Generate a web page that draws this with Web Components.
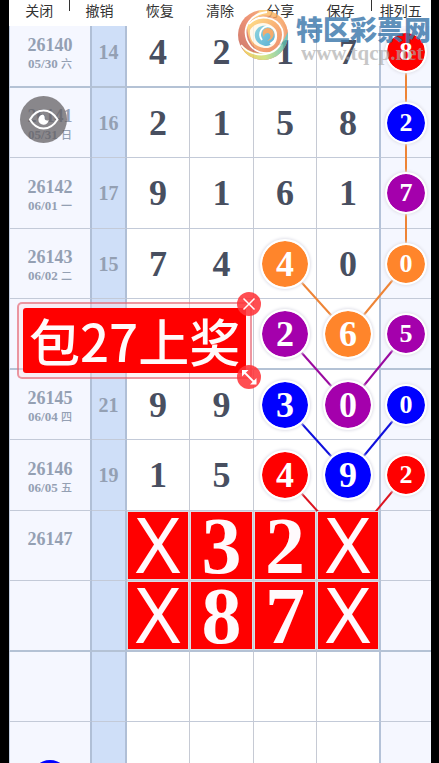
<!DOCTYPE html>
<html lang="zh-CN">
<head>
<meta charset="utf-8">
<meta name="viewport" content="width=device-width, initial-scale=1">
<title>排列五</title>
<style>
body { margin: 0; background: #000; }
</style>
</head>
<body>
<lottery-app></lottery-app>
<script>
const define = (name, html, setup) => {
  const template = document.createElement('template');
  template.innerHTML = html;
  customElements.define(name, class extends HTMLElement {
    constructor() {
      super();
      this.attachShadow({ mode: 'open' }).append(template.content.cloneNode(true));
    }
    connectedCallback() { if (setup) setup(this, this.shadowRoot); }
  });
};

define('number-ball', `
<style>
  :host { display: flex; align-items: center; justify-content: center; box-sizing: border-box;
    width: 50px; height: 50px; margin: 0 auto; border-radius: 50%; border: 2px solid #fff;
    background: var(--ball) padding-box; box-shadow: 0 0 3px 1px #e2e2ea; color: #fff;
    font: bold 36px/46px "Liberation Serif", serif; position: relative; z-index: 2; }
  :host([small]) { width: 42px; height: 42px; font-size: 26px; line-height: 38px; }
  :host([color=red]) { --ball: #ff0000; }
  :host([color=blue]) { --ball: #0000ff; }
  :host([color=purple]) { --ball: #a400ac; }
  :host([color=orange]) { --ball: #ff852b; }
</style><slot></slot>`);

define('pick-tile', `
<style>
  :host { display: flex; align-items: center; justify-content: center; box-sizing: border-box;
    height: 100%; border: 1px solid #dcdce2; background: #ff0000; color: #fffafc;
    font: bold 80px/66px "Liberation Serif", serif; position: relative; z-index: 2; }
  :host([blank]) { font: 400 77px/62px "Noto Sans", sans-serif; padding-bottom: 4px; }
</style><slot></slot>`);

define('tool-bar', `
<style>
  :host { display: grid; grid-auto-flow: column; grid-auto-columns: 1fr; height: 26px;
    background: #fff; position: relative; z-index: 3; }
</style><slot></slot>`);

define('tool-item', `
<style>
  :host { display: block; position: relative; }
  :host([divided])::before { content: ""; position: absolute; left: 0; top: 0; width: 1px; height: 11px; background: #333; }
  button { display: block; width: 100%; height: 20px; padding: 0; border: 0; background: none; color: #333;
    font: 400 14px/20px "Noto Sans CJK SC", sans-serif; }
</style><button type="button"><slot></slot></button>`);

define('trend-chart', `
<style>
  :host { display: block; position: relative; margin-top: -9px; background: #fff; }
  table { width: 100%; table-layout: fixed; border-collapse: separate; border-spacing: 0;
    font-family: "Liberation Serif", "Noto Sans CJK SC", serif; font-weight: bold; text-align: center; }
  th, td { padding: 0; box-sizing: border-box; border: 0 solid #c6cad4; border-right-width: 1px; border-bottom: 1px solid #c3cad8;
    vertical-align: middle; line-height: 1; }
  tr > * { height: 70px; }
  tr:nth-child(odd) > * { height: 71px; }
  tr:nth-child(4n+1) > * { border-bottom: 2px solid #b4c2d5; }
  .issue { background: #f5f7ff; color: #94a0b3; border-left: 1px solid #c3cfe2; border-right: 2px solid #b0bfd6; font-size: 18px; padding-top: 3px; }
  .issue span { display: block; line-height: 20px; }
  .issue small { display: block; height: 16px; font-size: 13px; line-height: 16px; }
  .issue i { font: 500 11px/16px "Noto Sans CJK SC", sans-serif; }
  .sum { background: #cfdff8; color: #94a0b3; border-right: 2px solid #b0bfd6; font-size: 20px; }
  .num { color: #484f60; font-size: 36px; }
  .num.d { border-right: 2px solid #b4c2d8; }
  .last { background: #f5f7ff; border-right: 0; }
  svg { position: absolute; left: 0; top: 0; width: 100%; height: 776px; z-index: 1; pointer-events: none; }
  line { stroke-width: 2; vector-effect: non-scaling-stroke; }
</style>
<table>
  <colgroup></colgroup>
  <tbody></tbody>
</table>
<svg viewBox="9 17 422 776" preserveAspectRatio="none" fill="none" aria-hidden="true">
  <g stroke="#ee8436"><line x1="406" y1="52" x2="406" y2="264"/><line x1="285" y1="264" x2="348" y2="334"/><line x1="406" y1="264" x2="348" y2="334"/></g>
  <g stroke="#9a0aa0"><line x1="285" y1="334" x2="348" y2="405"/><line x1="406" y1="334" x2="348" y2="405"/></g>
  <g stroke="#1010dc"><line x1="285" y1="405" x2="348" y2="475"/><line x1="406" y1="405" x2="348" y2="475"/></g>
  <g stroke="#dc1420"><line x1="285" y1="475" x2="348" y2="545"/><line x1="406" y1="475" x2="348" y2="545"/></g>
</svg>`, (host, root) => {
  const rows = [
    ['26140', '05/30 六', '14', '4', '2', '1', '7', '8red'],
    ['26141', '05/31 日', '16', '2', '1', '5', '8', '2blue'],
    ['26142', '06/01 一', '17', '9', '1', '6', '1', '7purple'],
    ['26143', '06/02 二', '15', '7', '4', '4orange', '0', '0orange'],
    ['', '', '', '', '', '2purple', '6orange', '5purple'],
    ['26145', '06/04 四', '21', '9', '9', '3blue', '0purple', '0blue'],
    ['26146', '06/05 五', '19', '1', '5', '4red', '9blue', '2red'],
    ['26147', '', '', 'X#', '3#', '2#', 'X#', ''],
    ['', '', '', 'X#', '8#', '7#', 'X#', ''],
    ['', '', '', '', '', '', '', ''],
    ['', '', '', '', '', '', '', '']
  ];
  const total = 422;
  root.querySelector('colgroup').innerHTML = [83, 35, 63, 64, 63, 64, 50]
    .map(w => `<col style="width:calc(100% * ${w} / ${total})">`).join('');
  const cell = (value, small) => {
    if (!value) return '';
    if (value[1] === '#') return `<pick-tile${value[0] === 'X' ? ' blank' : ''}>${value[0]}</pick-tile>`;
    if (value.length > 1) return `<number-ball color="${value.slice(1)}"${small ? ' small' : ''}>${value[0]}</number-ball>`;
    return value;
  };
  const issueCell = (issue, date) => {
    if (!issue) return '';
    const [day, week] = date.split(' ');
    return `<span>${issue}</span><small>${date ? `${day} <i>${week}</i>` : ''}</small>`;
  };
  root.querySelector('tbody').innerHTML = rows.map(([issue, date, sum, a, b, c, d, e]) => `<tr>
    <th class="issue" scope="row">${issueCell(issue, date)}</th>
    <td class="sum">${sum}</td><td class="num">${cell(a)}</td><td class="num">${cell(b)}</td>
    <td class="num">${cell(c)}</td><td class="num d">${cell(d)}</td><td class="last">${cell(e, true)}</td></tr>`).join('');
});

define('text-sticker', `
<style>
  :host { display: block; box-sizing: border-box; padding: 4px; border: 2px solid rgba(222, 60, 75, .5);
    border-radius: 5px; background: rgba(255, 225, 230, .4); }
  .text { display: block; padding: 0 6px; border-radius: 3px; background: #ff0000; color: #fffafa; text-align: center;
    white-space: nowrap; font: 500 51px/65px "Noto Sans CJK SC", sans-serif; }
  button { position: absolute; right: -11px; width: 24px; height: 24px; padding: 0; border: 0; border-radius: 50%;
    background: rgba(255, 52, 56, .87); }
  .close { top: -12px; }
  .resize { bottom: -12px; }
  svg { display: block; width: 24px; height: 24px; fill: none; stroke: #fff; stroke-width: 1.5; }
</style>
<span class="text"><slot></slot></span>
<button class="close" type="button" aria-label="关闭"><svg viewBox="0 0 24 24"><path d="M6.500 6.500l11 11M17.500 6.500l-11 11"/></svg></button>
<button class="resize" type="button" aria-label="缩放"><svg viewBox="0 0 24 24"><path d="M7 7l10.500 10.500" stroke-width="1.800"/><path d="M5 5h6.500l-6.500 6.500ZM19.500 19.500h-6.500l6.500-6.500Z" fill="#fff" stroke="none"/></svg></button>`);

define('eye-button', `
<style>
  :host { display: block; }
  button { display: block; width: 47px; height: 47px; padding: 0; border: 0; border-radius: 50%; background: rgba(96, 92, 94, .72); }
  svg { display: block; width: 47px; height: 47px; fill: none; stroke: #fff; stroke-width: 2; }
</style>
<button type="button" aria-label="显示"><svg viewBox="0 0 47 47">
  <path d="M10 23.500C17 11.500 30 11.500 37.500 23.500C30 35.500 17 35.500 10 23.500Z"/>
  <path d="M23 18.500a5.200 5.200 0 1 0 5.700 5.700c-2.700 .8-4.200-.5-4-2.200c.2-1.500-.4-2.700-1.700-3.500Z" fill="#fff" stroke="none"/>
</svg></button>`);

define('site-mark', `
<style>
  :host { display: flex; align-items: center; gap: 7px; pointer-events: none; }
  svg { width: 52px; height: 52px; opacity: .82; }
  .words { display: flex; flex-direction: column; padding-top: 6px; }
  b { font: 900 27px/30px "Noto Sans CJK SC", sans-serif; color: #3c78ac; opacity: .82; white-space: nowrap; }
  span { font: 700 21px/18px "Liberation Serif", serif; color: #aaa; opacity: .65; padding-left: 5px; }
</style>
<svg viewBox="0 0 52 52" aria-hidden="true">
  <defs>
    <linearGradient id="r" x1="0" y1="1" x2="1" y2="0"><stop offset="0" stop-color="#b8544c"/><stop offset=".5" stop-color="#ea7c58"/><stop offset="1" stop-color="#fcc070"/></linearGradient>
    <linearGradient id="y" x1="0" y1="0" x2="1" y2="1"><stop offset="0" stop-color="#ffe070"/><stop offset=".5" stop-color="#f8a058"/><stop offset="1" stop-color="#e87050"/></linearGradient>
    <linearGradient id="g" x1="0" y1="0" x2="1" y2="0"><stop offset="0" stop-color="#f4c040"/><stop offset=".5" stop-color="#c8e070"/><stop offset="1" stop-color="#48b8c0"/></linearGradient>
    <linearGradient id="b" x1="0" y1="0" x2="1" y2="1"><stop offset="0" stop-color="#78ccd8"/><stop offset="1" stop-color="#38a0cc"/></linearGradient>
    <clipPath id="c"><circle cx="26" cy="26" r="25"/></clipPath>
  </defs>
  <g clip-path="url(#c)">
    <path d="M0 0H52V52H0Z" fill="url(#r)"/>
    <path d="M14 12C24 4 36 5 43 12C51 20 50 32 44 40L54 36V0H24Z" fill="url(#y)"/>
    <path d="M10 15C22 4 42 8 46 24C47 34 42 41 34 44C22 46 10 36 10 15Z" fill="url(#y)"/>
    <path d="M5 36C14 46 32 48 43 36C47 31 50 25 52 20V54H10Z" fill="url(#g)"/>
    <path d="M13 21C20 10 38 12 40 26C41 34 35 40 27 39C17 38 12 30 13 21Z" fill="#fff8e8"/>
    <path d="M18 24C20 15 33 14 37 23C40 31 34 38 28 37C20 35 17 30 18 24Z" fill="url(#b)"/>
    <path d="M27 28C23 22 29 17 34 20C39 23 37 31 30 32C35 29 34 25 31 24C29 24 27 25 27 28Z" fill="#f49a4c"/>
    <g fill="none" stroke="#fff" stroke-width="1.800">
      <path d="M30 3C14 5 5 17 10 31C14 40 22 45 33 44"/>
      <path d="M12 15C22 4 40 8 45 20C48 30 43 40 33 44C22 48 10 44 4 36"/>
      <path d="M25 31C20 24 26 15 34 18C41 21 41 31 33 35"/>
    </g>
  </g>
</svg>
<div class="words"><b>特区彩票网</b><span>www.tqcp.net</span></div>`);

define('lottery-app', `
<style>
  :host { display: block; position: relative; height: 100vh; overflow: hidden; box-sizing: border-box; padding: 0 8px 0 9px; background: #000; }
  text-sticker { position: absolute; left: 17px; top: 302px; z-index: 4; width: 235px; }
  eye-button { position: absolute; left: 20px; top: 96px; z-index: 4; }
  site-mark { position: absolute; right: 8px; top: 8px; z-index: 5; }
  .drag { position: absolute; left: 31px; top: 760px; z-index: 4; width: 38px; height: 38px; padding: 0; border: 0; border-radius: 50%; background: #0000ff; }
</style>
<tool-bar>
  <tool-item>关闭</tool-item><tool-item divided>撤销</tool-item><tool-item>恢复</tool-item><tool-item>清除</tool-item><tool-item>分享</tool-item><tool-item>保存</tool-item><tool-item divided>排列五</tool-item>
</tool-bar>
<trend-chart></trend-chart>
<eye-button></eye-button>
<text-sticker>包27上奖</text-sticker>
<button class="drag" type="button" aria-label="蓝色"></button>
<site-mark></site-mark>`);
</script>
</body>
</html>
